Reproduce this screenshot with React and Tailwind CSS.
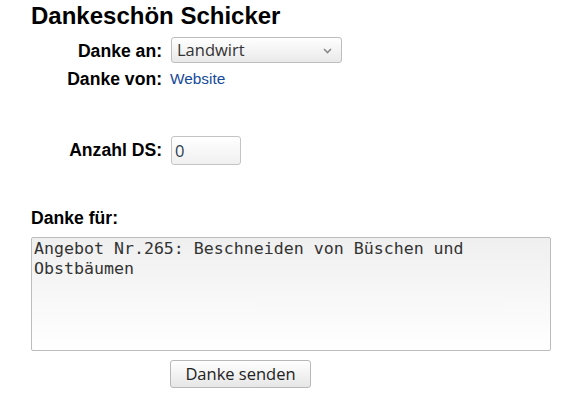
export default function App() {
  const label = "w-[131px] shrink-0 text-right font-bold text-[17.6px] text-black";
  return (
    <div className="min-h-[396px] w-[563px] bg-white pl-[31px] font-['Liberation_Sans',Arial,sans-serif] text-black">
      <h1 className="pt-[2px] text-[24px] font-bold leading-[28px]">Dankeschön Schicker</h1>

      <div className="mt-[6px] flex items-center">
        <div className={`${label} leading-[26px] pt-[2px]`}>Danke an:</div>
        <div className="ml-[9px] flex h-[26px] w-[171px] items-center justify-between rounded-[3px] border border-[#bdbdbd] bg-gradient-to-b from-white to-[#e9e9e9] pl-[5px] pr-[9px]">
          <span className="font-['Open_Sans',sans-serif] text-[16.5px] leading-[20px] text-[#333]">Landwirt</span>
          <svg width="9" height="6" viewBox="0 0 9 6" className="mt-[1px]">
            <path d="M1 1l3.5 3.5L8 1" fill="none" stroke="#8a8a8a" strokeWidth="1.6" />
          </svg>
        </div>
      </div>

      <div className="mt-[5px] flex h-[20px] items-center">
        <div className={`${label} leading-[20px]`}>Danke von:</div>
        <a className="ml-[8px] text-[15.4px] leading-[20px] text-[#16499a]">Website</a>
      </div>

      <div className="mt-[47px] flex items-center">
        <div className={`${label} leading-[29px]`}>Anzahl DS:</div>
        <div className="ml-[9px] flex h-[29px] w-[70px] items-center rounded-[3px] border border-[#c4c4c4] bg-gradient-to-b from-white to-[#f0f0f0] pl-[3px]">
          <span className="font-['Open_Sans',sans-serif] text-[16.5px] leading-[20px] text-[#2c3e50]">0</span>
        </div>
      </div>

      <div className="mt-[43px] text-[17.6px] font-bold leading-[20px]">Danke für:</div>

      <div className="mt-[9px] h-[114px] w-[520px] rounded-[2px] border border-[#bcbcbc] bg-gradient-to-b from-[#efefef] to-white px-[2px] pt-[1px] font-['DejaVu_Sans_Mono',monospace] text-[16.6px] leading-[20px] text-[#333]">
        Angebot Nr.265: Beschneiden von Büschen und
        <br />
        Obstbäumen
      </div>

      <div className="mt-[9px] flex">
        <div className="w-[139px] shrink-0" />
        <button className="flex h-[28px] w-[141px] items-center justify-center rounded-[3px] border border-[#b8b8b8] bg-gradient-to-b from-white to-[#e6e6e6] font-['Open_Sans',sans-serif] text-[16.5px] text-[#222]">
          Danke senden
        </button>
      </div>
    </div>
  );
}
